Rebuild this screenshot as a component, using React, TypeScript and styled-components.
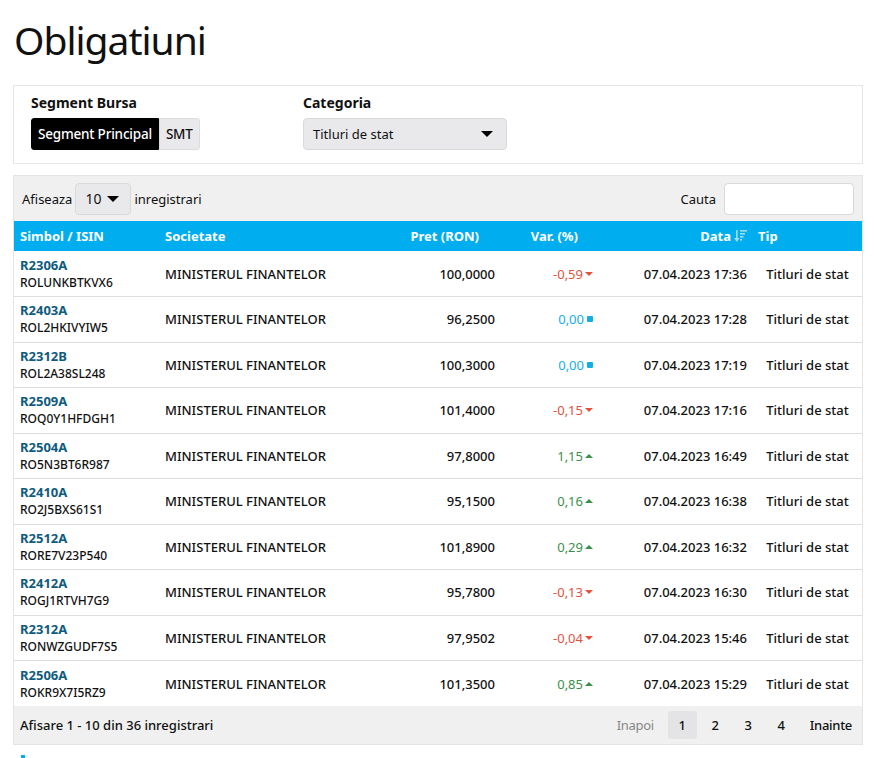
import React from "react";
import styled, { createGlobalStyle } from "styled-components";

const Global = createGlobalStyle`
  html, body { margin: 0; padding: 0; background: #fff; }
  body { font-family: "Noto Sans", "Open Sans", Arial, sans-serif; color: #111; }
  * { box-sizing: border-box; }
`;

const Page = styled.div`
  padding: 0 12px 0 13px;
  width: 875px;
`;

const Title = styled.h1`
  margin: 0;
  padding: 14px 0 0 1px;
  height: 85px;
  font-size: 39px;
  font-weight: 400;
  line-height: 52px;
  letter-spacing: -1px;
  color: #111;
`;

const FilterPanel = styled.div`
  border: 1px solid #e6e6e6;
  display: grid;
  grid-template-columns: 272px 1fr;
  padding: 8px 17px 13px;
  margin-bottom: 11px;
`;

const FilterGroup = styled.div`
  display: flex;
  flex-direction: column;
  gap: 4px;
`;

const Label = styled.div`
  font-size: 14px;
  font-weight: 700;
  line-height: 20px;
  margin-top: -1px;
  margin-bottom: 1px;
`;

const Toggle = styled.div`
  display: flex;
`;

const ToggleBtn = styled.div<{ $active?: boolean }>`
  height: 32px;
  display: flex;
  align-items: center;
  padding: 0 6px;
  font-size: 13.5px;
  font-weight: 500;
  letter-spacing: -0.2px;
  background: ${(p) => (p.$active ? "#000" : "#e9e9eb")};
  color: ${(p) => (p.$active ? "#fff" : "#111")};
  border: 1px solid ${(p) => (p.$active ? "#000" : "#dcdcdc")};
  border-radius: ${(p) => (p.$active ? "3px 0 0 3px" : "0 3px 3px 0")};
`;

const Select = styled.div`
  width: 204px;
  height: 32px;
  display: flex;
  align-items: center;
  justify-content: space-between;
  padding: 0 13px 0 9px;
  background: #e9e9eb;
  border: 1px solid #d9d9d9;
  border-radius: 4px;
  font-size: 13px;
`;

const Caret = styled.span`
  width: 0;
  height: 0;
  border-left: 6px solid transparent;
  border-right: 6px solid transparent;
  border-top: 6px solid #000;
`;

const TableWrap = styled.div`
  border: 1px solid #e4e4e4;
  background: #f0f0f0;
`;

const TopBar = styled.div`
  height: 45px;
  display: flex;
  align-items: center;
  justify-content: space-between;
  padding: 0 8px;
  font-size: 13px;
`;

const LenGroup = styled.div`
  display: flex;
  align-items: center;
  gap: 3px;
`;

const LenSelect = styled.div`
  width: 56px;
  height: 32px;
  display: flex;
  align-items: center;
  gap: 6px;
  padding: 0 9px;
  background: #e9e9eb;
  border: 1px solid #d9d9d9;
  border-radius: 4px;
  font-size: 14px;
`;

const SearchGroup = styled.div`
  display: flex;
  align-items: center;
  gap: 8px;
`;

const SearchInput = styled.div`
  width: 130px;
  height: 32px;
  background: #fff;
  border: 1px solid #d9d9d9;
  border-radius: 4px;
`;

const Table = styled.table`
  width: 100%;
  border-collapse: collapse;
  table-layout: fixed;
  background: #fff;
  font-size: 13px;
`;

const Th = styled.th<{ $align?: string; $pr?: number }>`
  background: #00aeef;
  color: #fff;
  font-weight: 700;
  font-size: 13px;
  height: 30px;
  padding: 0 ${(p) => p.$pr ?? 4}px 0 6px;
  text-align: ${(p) => p.$align ?? "left"};
  white-space: nowrap;
`;

const Tr = styled.tr`
  height: 45.5px;
  border-bottom: 1px solid #dedede;
  &:last-child { border-bottom: none; }
`;

const Td = styled.td<{ $align?: string }>`
  padding: 0 5px 0 6px;
  text-align: ${(p) => p.$align ?? "left"};
  font-weight: 500;
  white-space: nowrap;
`;

const Sym = styled.div`
  color: #0f5b7e;
  font-weight: 700;
  line-height: 18px;
`;

const Isin = styled.div`
  font-size: 12px;
  line-height: 18px;
  font-weight: 500;
`;

const VarCell = styled.span<{ $c: string }>`
  color: ${(p) => p.$c};
  font-weight: 400;
  display: inline-flex;
  align-items: center;
  gap: 2px;
`;

const Down = styled.span`
  width: 0; height: 0;
  border-left: 4px solid transparent;
  border-right: 4px solid transparent;
  border-top: 4px solid currentColor;
`;
const Up = styled.span`
  width: 0; height: 0;
  border-left: 4px solid transparent;
  border-right: 4px solid transparent;
  border-bottom: 4px solid currentColor;
`;
const Flat = styled.span`
  width: 6px; height: 6px;
  background: currentColor;
  border-radius: 1px;
  margin-left: 1px;
`;

const Footer = styled.div`
  height: 38px;
  display: flex;
  align-items: center;
  justify-content: space-between;
  padding: 0 0 0 6px;
  font-size: 13px;
  font-weight: 500;
`;

const Pager = styled.div`
  display: flex;
  align-items: center;
  gap: 4px;
`;

const PageBtn = styled.div<{ $active?: boolean; $disabled?: boolean; $text?: boolean }>`
  height: 28px;
  width: ${(p) => (p.$text ? "auto" : "29px")};
  padding: 0 ${(p) => (p.$text ? 10 : 0)}px;
  display: flex;
  align-items: center;
  justify-content: center;
  border-radius: 3px;
  letter-spacing: ${(p) => (p.$text ? "-0.3px" : "0")};
  background: ${(p) => (p.$active ? "#e4e4e6" : "transparent")};
  color: ${(p) => (p.$disabled ? "#888" : "#111")};
  font-weight: ${(p) => (p.$disabled ? 400 : 500)};
`;

const BottomMark = styled.div`
  margin: 10px 0 0 8px;
  width: 4px;
  height: 4px;
  background: #00aeef;
`;

const SortIcon = () => (
  <svg width="14" height="14" viewBox="0 0 14 14" style={{ verticalAlign: "-2px", marginLeft: 3 }}>
    <g fill="#9fdcf5">
      <rect x="2" y="1" width="1.6" height="10" />
      <path d="M0 9 L5.6 9 L2.8 13 Z" />
      <rect x="6" y="1" width="7" height="1.6" />
      <rect x="6" y="4" width="5" height="1.6" />
      <rect x="6" y="7" width="3.5" height="1.6" />
      <rect x="6" y="10" width="2" height="1.6" />
    </g>
  </svg>
);

type Row = { s: string; i: string; p: string; v: string; d: string };
const rows: Row[] = [
  { s: "R2306A", i: "ROLUNKBTKVX6", p: "100,0000", v: "-0,59", d: "07.04.2023 17:36" },
  { s: "R2403A", i: "ROL2HKIVYIW5", p: "96,2500", v: "0,00", d: "07.04.2023 17:28" },
  { s: "R2312B", i: "ROL2A38SL248", p: "100,3000", v: "0,00", d: "07.04.2023 17:19" },
  { s: "R2509A", i: "ROQ0Y1HFDGH1", p: "101,4000", v: "-0,15", d: "07.04.2023 17:16" },
  { s: "R2504A", i: "RO5N3BT6R987", p: "97,8000", v: "1,15", d: "07.04.2023 16:49" },
  { s: "R2410A", i: "RO2J5BXS61S1", p: "95,1500", v: "0,16", d: "07.04.2023 16:38" },
  { s: "R2512A", i: "RORE7V23P540", p: "101,8900", v: "0,29", d: "07.04.2023 16:32" },
  { s: "R2412A", i: "ROGJ1RTVH7G9", p: "95,7800", v: "-0,13", d: "07.04.2023 16:30" },
  { s: "R2312A", i: "RONWZGUDF7S5", p: "97,9502", v: "-0,04", d: "07.04.2023 15:46" },
  { s: "R2506A", i: "ROKR9X7I5RZ9", p: "101,3500", v: "0,85", d: "07.04.2023 15:29" },
];

const VarValue = ({ v }: { v: string }) => {
  if (v.startsWith("-"))
    return (
      <VarCell $c="#e2533e">
        {v}
        <Down />
      </VarCell>
    );
  if (v === "0,00")
    return (
      <VarCell $c="#12aee8">
        {v}
        <Flat />
      </VarCell>
    );
  return (
    <VarCell $c="#3b8f4a">
      {v}
      <Up />
    </VarCell>
  );
};

export default function App() {
  return (
    <>
      <Global />
      <Page>
        <Title>Obligatiuni</Title>
        <FilterPanel>
          <FilterGroup>
            <Label>Segment Bursa</Label>
            <Toggle>
              <ToggleBtn $active>Segment Principal</ToggleBtn>
              <ToggleBtn>SMT</ToggleBtn>
            </Toggle>
          </FilterGroup>
          <FilterGroup>
            <Label>Categoria</Label>
            <Select>
              Titluri de stat
              <Caret />
            </Select>
          </FilterGroup>
        </FilterPanel>
        <TableWrap>
          <TopBar>
            <LenGroup>
              Afiseaza
              <LenSelect>
                10
                <Caret />
              </LenSelect>
              inregistrari
            </LenGroup>
            <SearchGroup>
              Cauta
              <SearchInput />
            </SearchGroup>
          </TopBar>
          <Table>
            <colgroup>
              <col style={{ width: 145 }} />
              <col style={{ width: 242 }} />
              <col style={{ width: 99 }} />
              <col style={{ width: 98 }} />
              <col style={{ width: 154 }} />
              <col />
            </colgroup>
            <thead>
              <tr>
                <Th>Simbol / ISIN</Th>
                <Th>Societate</Th>
                <Th $align="right" $pr={21}>Pret (RON)</Th>
                <Th $align="right" $pr={20}>Var. (%)</Th>
                <Th $align="right" $pr={4}>
                  Data
                  <SortIcon />
                </Th>
                <Th>Tip</Th>
              </tr>
            </thead>
            <tbody>
              {rows.map((r) => (
                <Tr key={r.s + r.i}>
                  <Td>
                    <Sym>{r.s}</Sym>
                    <Isin>{r.i}</Isin>
                  </Td>
                  <Td>MINISTERUL FINANTELOR</Td>
                  <Td $align="right">{r.p}</Td>
                  <Td $align="right">
                    <VarValue v={r.v} />
                  </Td>
                  <Td $align="right">{r.d}</Td>
                  <Td $align="center">Titluri de stat</Td>
                </Tr>
              ))}
            </tbody>
          </Table>
          <Footer>
            <span>Afisare 1 - 10 din 36 inregistrari</span>
            <Pager>
              <PageBtn $text $disabled>Inapoi</PageBtn>
              <PageBtn $active>1</PageBtn>
              <PageBtn>2</PageBtn>
              <PageBtn>3</PageBtn>
              <PageBtn>4</PageBtn>
              <PageBtn $text>Inainte</PageBtn>
            </Pager>
          </Footer>
        </TableWrap>
        <BottomMark />
      </Page>
    </>
  );
}
